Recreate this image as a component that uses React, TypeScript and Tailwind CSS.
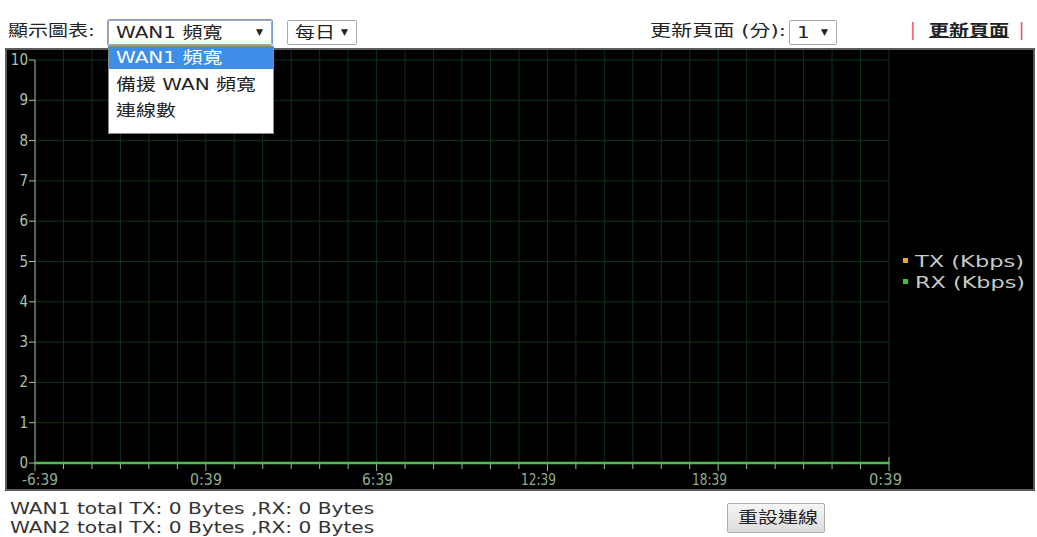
const yLabels = [10, 9, 8, 7, 6, 5, 4, 3, 2, 1, 0];
const Y0 = 463;
const YTOP = 60;
const X0 = 35;
const X1 = 889;
const step = (Y0 - YTOP) / 10;
const xStep = (X1 - X0) / 30;

const xLabels = [
  { t: '-6:39', x: 22, w: 36 },
  { t: '0:39', x: 190, w: 32 },
  { t: '6:39', x: 362, w: 31 },
  { t: '12:39', x: 521, w: 35 },
  { t: '18:39', x: 692, w: 35 },
  { t: '0:39', x: 869, w: 33 },
];

const axisFont = "'DejaVu Sans Condensed','DejaVu Sans',sans-serif";

function Chart() {
  const cols = Array.from({ length: 31 }, (_, i) => X0 + i * xStep);
  return (
    <svg width="1026" height="439" viewBox="7 50 1026 439" className="block">
      {/* grid */}
      {yLabels.slice(0, 10).map((v) => {
        const y = Y0 - v * step;
        return <line key={'h' + v} x1={X0} x2={X1} y1={y} y2={y} stroke="#0c3316" strokeWidth="1" />;
      })}
      {cols.slice(1).map((x, i) => (
        <line key={'v' + i} x1={x} x2={x} y1={50} y2={Y0} stroke="#0c3316" strokeWidth="1" />
      ))}
      {/* y axis */}
      <line x1={X0} x2={X0} y1={YTOP} y2={Y0} stroke="#a3c6a3" strokeWidth="1" />
      {yLabels.map((v) => {
        const y = Y0 - v * step;
        return (
          <g key={'y' + v}>
            <line x1={X0 - 6} x2={X0} y1={y} y2={y} stroke="#a3c6a3" strokeWidth="1" />
            <text x={X0 - 7} y={y + 5} textAnchor="end" fontSize="15" fill="#a9c4a9" fontFamily={axisFont}>
              {v}
            </text>
          </g>
        );
      })}
      {/* x axis */}
      {cols.map((x, i) => (
        <line key={'t' + i} x1={x} x2={x} y1={Y0} y2={Y0 + (i % 6 === 0 ? 8 : 6)} stroke="#8cc48c" strokeWidth="1" />
      ))}
      <line x1={X1} x2={X1} y1={Y0 - 6} y2={Y0} stroke="#8cc48c" strokeWidth="1" />
      <line x1={X0} x2={X1} y1={Y0} y2={Y0} stroke="#4fc04f" strokeWidth="2.5" />
      {xLabels.map((l, i) => (
        <text key={'x' + i} x={l.x} y={Y0 + 22} fontSize="15" fill="#8fae8f" fontFamily={axisFont} textLength={l.w} lengthAdjust="spacingAndGlyphs">
          {l.t}
        </text>
      ))}
      {/* legend */}
      <rect x="903" y="258" width="5" height="5" fill="#f0a040" />
      <text x="915" y="267" fontSize="16" fill="#c4ccc4" fontFamily="'DejaVu Sans',sans-serif" textLength="109" lengthAdjust="spacingAndGlyphs">TX (Kbps)</text>
      <rect x="903" y="279" width="5" height="5" fill="#3cc43c" />
      <text x="915" y="288" fontSize="16" fill="#c4ccc4" fontFamily="'DejaVu Sans',sans-serif" textLength="110" lengthAdjust="spacingAndGlyphs">RX (Kbps)</text>
    </svg>
  );
}

function Wide({ children, className = '' }: { children: React.ReactNode; className?: string }) {
  return <span className={`inline-block whitespace-nowrap origin-left scale-x-[1.25] ${className}`}>{children}</span>;
}

function Select({ label, width }: { label: string; width: string }) {
  return (
    <div className={`h-[25px] ${width} flex items-center justify-between border border-[#a9a9a9] rounded-[2px] bg-white pl-[7px] pr-[8px] text-[16px] leading-none text-[#222]`}>
      <Wide>{label}</Wide>
      <span className="text-[9px]">▼</span>
    </div>
  );
}

export default function App() {
  return (
    <div className="relative w-[1037px] h-[537px] bg-white overflow-hidden text-[#222] font-['DejaVu_Sans','Noto_Sans_CJK_TC',sans-serif]">
      <div className="h-[48px] flex items-start pt-[20px]">
        <div className="w-[107px] pl-[8px] pt-[3px] text-[16px] leading-none">
          <Wide>顯示圖表:</Wide>
        </div>
        <div className="border border-[#7aa0d4] rounded-[2px] -mt-[1px]">
          <Select label="WAN1 頻寬" width="w-[164px]" />
        </div>
        <div className="ml-[14px]">
          <Select label="每日" width="w-[70px]" />
        </div>
        <div className="ml-[293px] w-[139px] pt-[3px] text-[16px] leading-none">
          <span className="inline-block whitespace-nowrap origin-left scale-x-[1.32]">更新頁面 (分):</span>
        </div>
        <Select label="1" width="w-[48px]" />
        <span className="ml-[73px] pt-[2px] text-[17px] leading-none text-[#e0506a]">|</span>
        <div className="ml-[13px] w-[90px] pt-[3px] text-[16px] leading-none font-bold">
          <Wide className="underline">更新頁面</Wide>
        </div>
        <span className="pt-[2px] text-[17px] leading-none text-[#e0506a]">|</span>
      </div>

      <div className="ml-[5px] w-[1030px] h-[443px] bg-black border-2 border-[#5c5c5c]">
        <Chart />
      </div>

      <div className="flex items-start">
        <div className="w-[717px] pl-[10px] pt-[8px] text-[16px] leading-[19px] text-[#333]">
          <div><Wide className="scale-x-[1.26]">WAN1 total TX: 0 Bytes ,RX: 0 Bytes</Wide></div>
          <div><Wide className="scale-x-[1.26]">WAN2 total TX: 0 Bytes ,RX: 0 Bytes</Wide></div>
        </div>
        <button className="ml-[10px] mt-[12px] w-[98px] h-[30px] pl-[10px] text-left border border-[#adadad] rounded-[2px] bg-gradient-to-b from-[#f6f6f6] to-[#dcdcdc] text-[16px] leading-none text-[#222]">
          <Wide>重設連線</Wide>
        </button>
      </div>

      <div className="absolute left-[108px] top-[46px] w-[166px] h-[88px] bg-white border border-[#8a8a8a] text-[16px] leading-none">
        <div className="h-[22px] flex items-center bg-[#3d8ee8] text-white pl-[7px]"><Wide>WAN1 頻寬</Wide></div>
        <div className="h-[32px] flex items-center pl-[7px]"><Wide>備援 WAN 頻寬</Wide></div>
        <div className="h-[20px] flex items-center pl-[7px]"><Wide>連線數</Wide></div>
      </div>
    </div>
  );
}
